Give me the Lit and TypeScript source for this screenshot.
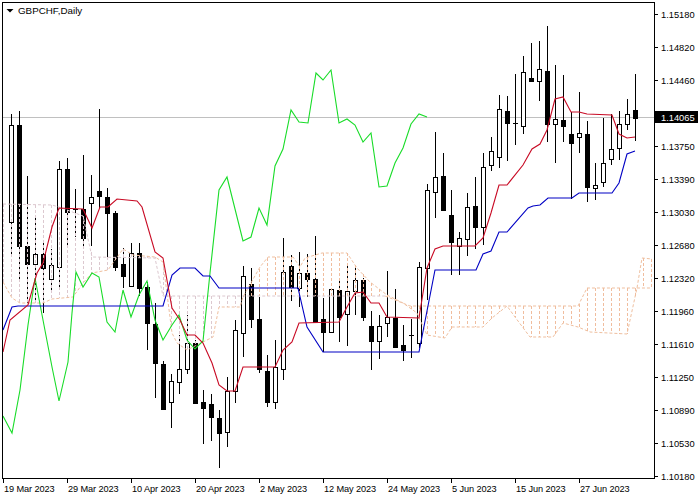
import { LitElement, html, svg, css } from "lit";
import { customElement } from "lit/decorators.js";

// high, bodyTop, bodyBottom, low, white(1)/black(0); candle k sits at x = 11 + 8k
const C: number[][] = [
[114,125,222,255,1],[111,125,246,282,0],[176,246,264,303,0],[215,254,264,300,1],[241,254,268,313,0],[249,265,279,293,1],
[161,169,267,288,1],[158,169,212,247,0],[189,209,209,237,0],[155,209,238,246,0],[175,197,203,246,1],[109,191,196,208,0],
[188,197,213,260,0],[211,213,267,271,0],[248,264,276,288,0],[243,253,286,287,1],[243,253,288,296,0],[282,287,323,350,0],
[303,324,363,398,0],[361,364,409,410,0],[374,381,402,428,1],[335,369,382,394,1],[315,343,369,374,1],[340,343,403,403,0],
[390,402,408,444,0],[394,404,417,441,0],[410,418,433,468,0],[377,391,432,447,1],[320,330,391,403,1],[266,276,333,357,1],
[268,284,319,328,0],[297,319,369,373,0],[355,371,402,407,0],[340,367,402,409,1],[238,272,369,380,1],[255,266,287,301,0],
[252,273,288,307,1],[254,273,279,297,0],[236,279,322,322,0],[298,319,332,352,0],[288,289,332,332,1],[278,290,317,342,0],
[263,291,314,346,1],[266,280,291,315,1],[278,280,317,321,0],[311,326,341,370,0],[315,326,341,359,1],[271,317,323,337,1],
[289,318,347,348,0],[325,345,350,361,0],[319,335,335,358,0],[262,267,343,348,1],[184,190,268,300,1],[132,177,192,218,1],
[153,176,210,210,0],[190,215,242,275,0],[232,238,246,275,1],[193,207,239,256,1],[177,206,227,249,0],[153,167,227,245,1],
[137,151,165,171,1],[95,109,157,168,1],[96,111,123,161,0],[74,123,123,145,0],[56,72,126,134,1],[43,78,81,81,0],
[41,69,81,101,1],[26,71,124,142,0],[65,119,124,163,1],[75,120,126,142,0],[112,134,143,199,0],[92,133,137,153,1],
[121,134,187,202,0],[163,185,188,200,1],[118,163,182,187,1],[114,149,159,165,1],[111,124,148,160,1],[99,114,124,130,1],[74,110,118,141,0],
];

const TENKAN = "3,352 10,320 28,305 37,273 43,263 52,227 59,208 83,209 92,228 100,207 108,207 117,199 137,201 142,207 155,252 163,258 172,308 180,320 187,335 195,335 203,343 212,363 219,385 227,391 235,391 243,367 275,367 283,350 292,342 299,323 339,322 347,307 355,293 363,292 371,303 379,303 387,317 419,318 427,268 435,249 443,246 475,246 483,238 491,213 499,185 507,185 523,165 532,149 540,144 547,130 555,99 563,97 571,112 579,112 587,114 612,115 619,134 627,138 635,137";
const KIJUN = "3,330 12,307 18,306 163,306 172,275 180,268 195,268 203,276 210,276 219,288 298,288 307,327 323,352 419,352 435,270 476,270 483,254 491,251 499,232 507,232 528,208 533,206 540,205 548,198 572,198 579,193 612,193 619,183 627,154 635,151";
const CHIKOU = "3,416 12,433 20,390 28,325 35,278 43,320 52,367 59,401 68,362 72,313 76,272 83,287 92,273 99,277 107,322 115,332 123,290 131,317 139,295 147,281 155,320 163,340 172,325 179,315 187,340 195,349 203,341 210,273 219,190 227,177 243,241 251,237 259,208 267,225 275,166 283,149 291,110 299,122 308,123 316,73 323,80 331,70 339,123 347,119 355,125 363,142 371,133 379,187 387,186 395,163 403,148 411,124 419,114 427,117";
const SENKOU_A: number[][] = [[3,282],[12,298],[20,303],[43,303],[52,299],[73,297],[83,283],[92,273],[108,270],[123,249],[133,255],[155,257],[163,262],[172,333],[177,343],[187,350],[203,342],[213,337],[219,307],[240,307],[243,297],[260,267],[268,257],[293,257],[300,267],[305,258],[322,253],[347,253],[357,268],[370,282],[387,295],[403,303],[417,313],[427,335],[445,338],[452,327],[483,327],[492,318],[507,306],[515,317],[530,337],[553,337],[563,323],[578,327],[590,332],[627,334],[637,288],[642,258],[652,259]];
const SENKOU_B: number[][] = [[3,204],[52,205],[59,207],[83,216],[92,257],[155,258],[163,296],[385,296],[410,306],[578,306],[587,288],[652,288]];

const PRICES: [string, number][] = [
["1.15180",14],["1.14820",47],["1.14460",80],["1.14100",113],["1.13750",146],["1.13390",179],["1.13030",212],["1.12680",245],
["1.12320",278],["1.11960",311],["1.11610",344],["1.11250",377],["1.10890",410],["1.10530",443],["1.10180",476],
];
const DATES: [string, number][] = [
["19 Mar 2023",3],["29 Mar 2023",67],["10 Apr 2023",131],["20 Apr 2023",195],["2 May 2023",259],
["12 May 2023",323],["24 May 2023",387],["5 Jun 2023",451],["15 Jun 2023",515],["27 Jun 2023",579],
];

const at = (pts: number[][], x: number) => {
  for (let i = 1; i < pts.length; i++) {
    if (x <= pts[i][0]) {
      const [x0, y0] = pts[i - 1];
      const [x1, y1] = pts[i];
      return y0 + ((y1 - y0) * (x - x0)) / (x1 - x0);
    }
  }
  return pts[pts.length - 1][1];
};
const toPts = (p: number[][]) => p.map((q) => q.join(",")).join(" ");

@customElement("app-root")
export class AppRoot extends LitElement {
  static styles = css`
    :host { display: block; width: 700px; height: 500px; background: #fff; }
    svg { display: block; }
    text { font-family: "Liberation Sans", Arial, sans-serif; font-size: 9.3px; fill: #000; }
    .date { letter-spacing: -0.1px; font-size: 9.2px; }
    .title { font-size: 9.8px; }
    .frame { fill: none; stroke: #000; stroke-width: 1; shape-rendering: crispEdges; }
    .tick { stroke: #000; stroke-width: 1; shape-rendering: crispEdges; }
    .bid { stroke: #c0c0c0; stroke-width: 1; shape-rendering: crispEdges; }
    .wick { stroke: #000; stroke-width: 1; shape-rendering: crispEdges; }
    .up { fill: #fff; stroke: #000; stroke-width: 1; shape-rendering: crispEdges; }
    .down { fill: #000; stroke: #000; stroke-width: 1; shape-rendering: crispEdges; }
    .hatch-pink { stroke: #dcc8cf; stroke-width: 1; stroke-dasharray: 3 2; shape-rendering: crispEdges; }
    .hatch-sand { stroke: #f0bd9e; stroke-width: 1; stroke-dasharray: 3 2; shape-rendering: crispEdges; }
    .cloud-a { fill: none; stroke: #efbf9f; stroke-width: 1; stroke-dasharray: 3 2; }
    .cloud-b { fill: none; stroke: #dcc8cf; stroke-width: 1; stroke-dasharray: 3 2; }
    .cloud-b2 { fill: none; stroke: #efbf9f; stroke-width: 1; stroke-dasharray: 3 2; }
    .tenkan { fill: none; stroke: #c80a24; stroke-width: 1.1; }
    .kijun { fill: none; stroke: #0000c4; stroke-width: 1.1; }
    .chikou { fill: none; stroke: #18dc28; stroke-width: 1.1; }
    .badge { fill: #000; }
    .badge-text { fill: #fff; }
    .marker { fill: #000; }
  `;

  private hatch() {
    const out = [];
    for (let x = 3; x <= 651; x += 8) {
      const a = at(SENKOU_A, x);
      const b = at(SENKOU_B, x);
      const cls = x < 243 ? "hatch-pink" : "hatch-sand";
      out.push(svg`<line class=${cls} x1=${x + 0.5} x2=${x + 0.5} y1=${Math.min(a, b)} y2=${Math.max(a, b)}></line>`);
    }
    return out;
  }

  private candles() {
    return C.map(([hi, top, bot, lo, white], k) => {
      const x = 11 + 8 * k;
      const h = bot - top;
      return svg`
        <line class="wick" x1=${x + 0.5} x2=${x + 0.5} y1=${hi} y2=${lo}></line>
        ${h === 0
          ? svg`<line class="wick" x1=${x - 2} x2=${x + 3} y1=${top + 0.5} y2=${top + 0.5}></line>`
          : svg`<rect class=${white ? "up" : "down"} x=${x - 1.5} y=${top + 0.5} width="4" height=${h}></rect>`}
      `;
    });
  }

  render() {
    const bLeft = SENKOU_B.filter((p) => p[0] <= 385);
    const bRight = SENKOU_B.filter((p) => p[0] >= 385);
    return html`
      <svg width="700" height="500" viewBox="0 0 700 500" role="img" aria-label="GBPCHF daily candlestick chart with Ichimoku">
        <line class="bid" x1="3" x2="654" y1="117.5" y2="117.5"></line>
        ${this.candles()}
        ${this.hatch()}
        <polyline class="cloud-a" points=${toPts(SENKOU_A)}></polyline>
        <polyline class="cloud-b" points=${toPts(bLeft)}></polyline>
        <polyline class="cloud-b2" points=${toPts(bRight)}></polyline>
        <polyline class="chikou" points=${CHIKOU}></polyline>
        <polyline class="kijun" points=${KIJUN}></polyline>
        <polyline class="tenkan" points=${TENKAN}></polyline>

        <rect class="frame" x="2.5" y="2.5" width="652" height="476"></rect>

        ${PRICES.map(([t, y]) => svg`
          <line class="tick" x1="655" x2="658" y1=${y + 0.5} y2=${y + 0.5}></line>
          <text x="661" y=${y + 3.5}>${t}</text>
        `)}
        ${DATES.map(([t, x]) => svg`
          <line class="tick" x1=${x + 0.5} x2=${x + 0.5} y1="479" y2="483"></line>
          <text class="date" x=${x + 1} y="492">${t}</text>
        `)}

        <rect class="badge" x="655" y="111" width="43" height="12"></rect>
        <text class="badge-text" x="661" y="120.5">1.14065</text>

        <polygon class="marker" points="6.5,9 13.5,9 10,12.5"></polygon>
        <text class="title" x="18" y="14">GBPCHF,Daily</text>
      </svg>
    `;
  }
}
